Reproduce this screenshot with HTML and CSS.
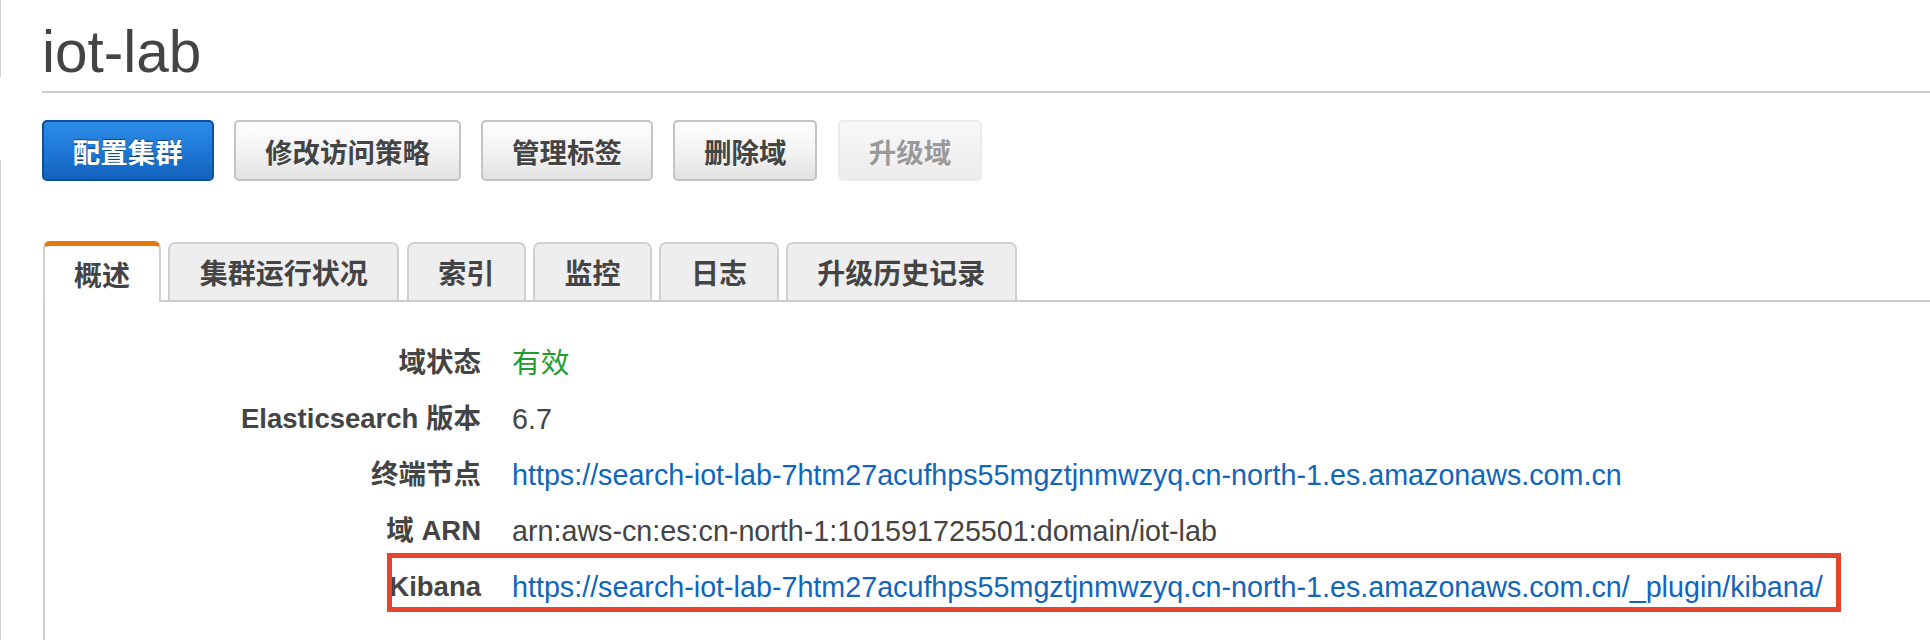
FILE: index.html
```html
<!DOCTYPE html>
<html lang="zh-CN">
<head>
<meta charset="utf-8">
<title>iot-lab</title>
<link rel="stylesheet" href="styles.css">
</head>
<body>
<div class="page">
  <h1 class="title">iot-lab</h1>
  <div class="actions">
    <button class="btn btn-primary">配置集群</button>
    <button class="btn">修改访问策略</button>
    <button class="btn">管理标签</button>
    <button class="btn">删除域</button>
    <button class="btn btn-disabled" disabled>升级域</button>
  </div>
  <div class="tabset">
    <div class="tabbar">
      <div class="tab tab-active">概述</div>
      <div class="tab">集群运行状况</div>
      <div class="tab">索引</div>
      <div class="tab">监控</div>
      <div class="tab">日志</div>
      <div class="tab">升级历史记录</div>
    </div>
    <div class="panel">
      <dl class="details">
        <dt>域状态</dt>
        <dd class="ok">有效</dd>
        <dt>Elasticsearch 版本</dt>
        <dd>6.7</dd>
        <dt>终端节点</dt>
        <dd><a href="#">https://search-iot-lab-7htm27acufhps55mgztjnmwzyq.cn-north-1.es.amazonaws.com.cn</a></dd>
        <dt>域 ARN</dt>
        <dd>arn:aws-cn:es:cn-north-1:101591725501:domain/iot-lab</dd>
        <dt>Kibana</dt>
        <dd><a href="#">https://search-iot-lab-7htm27acufhps55mgztjnmwzyq.cn-north-1.es.amazonaws.com.cn/_plugin/kibana/</a></dd>
      </dl>
      <div class="annotation"></div>
    </div>
  </div>
</div>
</body>
</html>
```

FILE: styles.css
```css
html, body {
  margin: 0;
  padding: 0;
}

body {
  min-height: 640px;
  overflow: hidden;
  background: #fff linear-gradient(to bottom, #d2d2d2 0, #d2d2d2 77px, transparent 77px, transparent 160px, #d2d2d2 160px) no-repeat 0 0 / 1px 100%;
  font-family: "Liberation Sans", "Noto Sans CJK SC", sans-serif;
  color: #444;
}

.page {
  padding-left: 42px;
}

.title {
  margin: 0;
  padding: 19px 0 6px;
  font-size: 58.5px;
  line-height: 66px;
  font-weight: normal;
  color: #444;
  border-bottom: 2px solid #cccccc;
}

.actions {
  display: flex;
  gap: 20.5px;
  margin-top: 27px;
}

.btn {
  height: 61px;
  padding: 0 28.8px;
  border: 2px solid #c4c4c4;
  border-radius: 5px;
  background: linear-gradient(to bottom, #fefefe 0%, #f3f3f3 50%, #e2e2e2 100%);
  font-family: "Liberation Sans", "Noto Sans CJK SC", sans-serif;
  font-size: 27.5px;
  font-weight: bold;
  color: #444;
  text-shadow: 0 1px 0 #fff;
  display: flex;
  align-items: center;
  justify-content: center;
  box-sizing: border-box;
}

.btn-primary {
  border-color: #0d4f98;
  background: linear-gradient(to bottom, #2c8ce8 0%, #1f78d6 50%, #1262bd 100%);
  color: #fff;
  text-shadow: 0 -1px 1px rgba(0, 0, 0, 0.45);
}

.btn-disabled {
  border-color: #ebebeb;
  background: linear-gradient(to bottom, #f8f8f8 0%, #ececec 100%);
  color: #9a9a9a;
  text-shadow: 0 1px 0 #fff;
}

.tabset {
  margin-top: 60px;
  margin-left: 1px;
}

.tabbar {
  display: flex;
  align-items: flex-end;
  gap: 7.2px;
  border-bottom: 2px solid #cccccc;
}

.tab {
  height: 58px;
  box-sizing: border-box;
  padding: 0 29.6px;
  border: 2px solid #d0d0d0;
  border-bottom: none;
  border-radius: 7px 7px 0 0;
  background: #eeeeee;
  font-size: 28px;
  font-weight: bold;
  color: #444;
  display: flex;
  align-items: center;
}

.tab-active {
  height: 61px;
  margin-bottom: -2px;
  border-top: 5px solid #e47a0e;
  background: #fff;
  position: relative;
  padding-left: 29px;
  padding-right: 29px;
}

.panel {
  position: relative;
  border-left: 2px solid #cccccc;
  padding-top: 33px;
  min-height: 320px;
}

.details {
  margin: 0;
  display: grid;
  grid-template-columns: 436px 1fr;
  column-gap: 31px;
  line-height: 56px;
}

.details dt {
  margin: 0;
  text-align: right;
  font-size: 27.5px;
  font-weight: bold;
  color: #444;
  white-space: nowrap;
}

.details dd {
  margin: 0;
  font-size: 28.7px;
  color: #444;
  white-space: nowrap;
}

.details dd.ok {
  color: #1f9d2f;
}

.details a {
  color: #1166bb;
  text-decoration: none;
}

.annotation {
  position: absolute;
  left: 342px;
  top: 251px;
  width: 1454px;
  height: 59px;
  box-sizing: border-box;
  border: 5px solid #e8432b;
  pointer-events: none;
}
```
